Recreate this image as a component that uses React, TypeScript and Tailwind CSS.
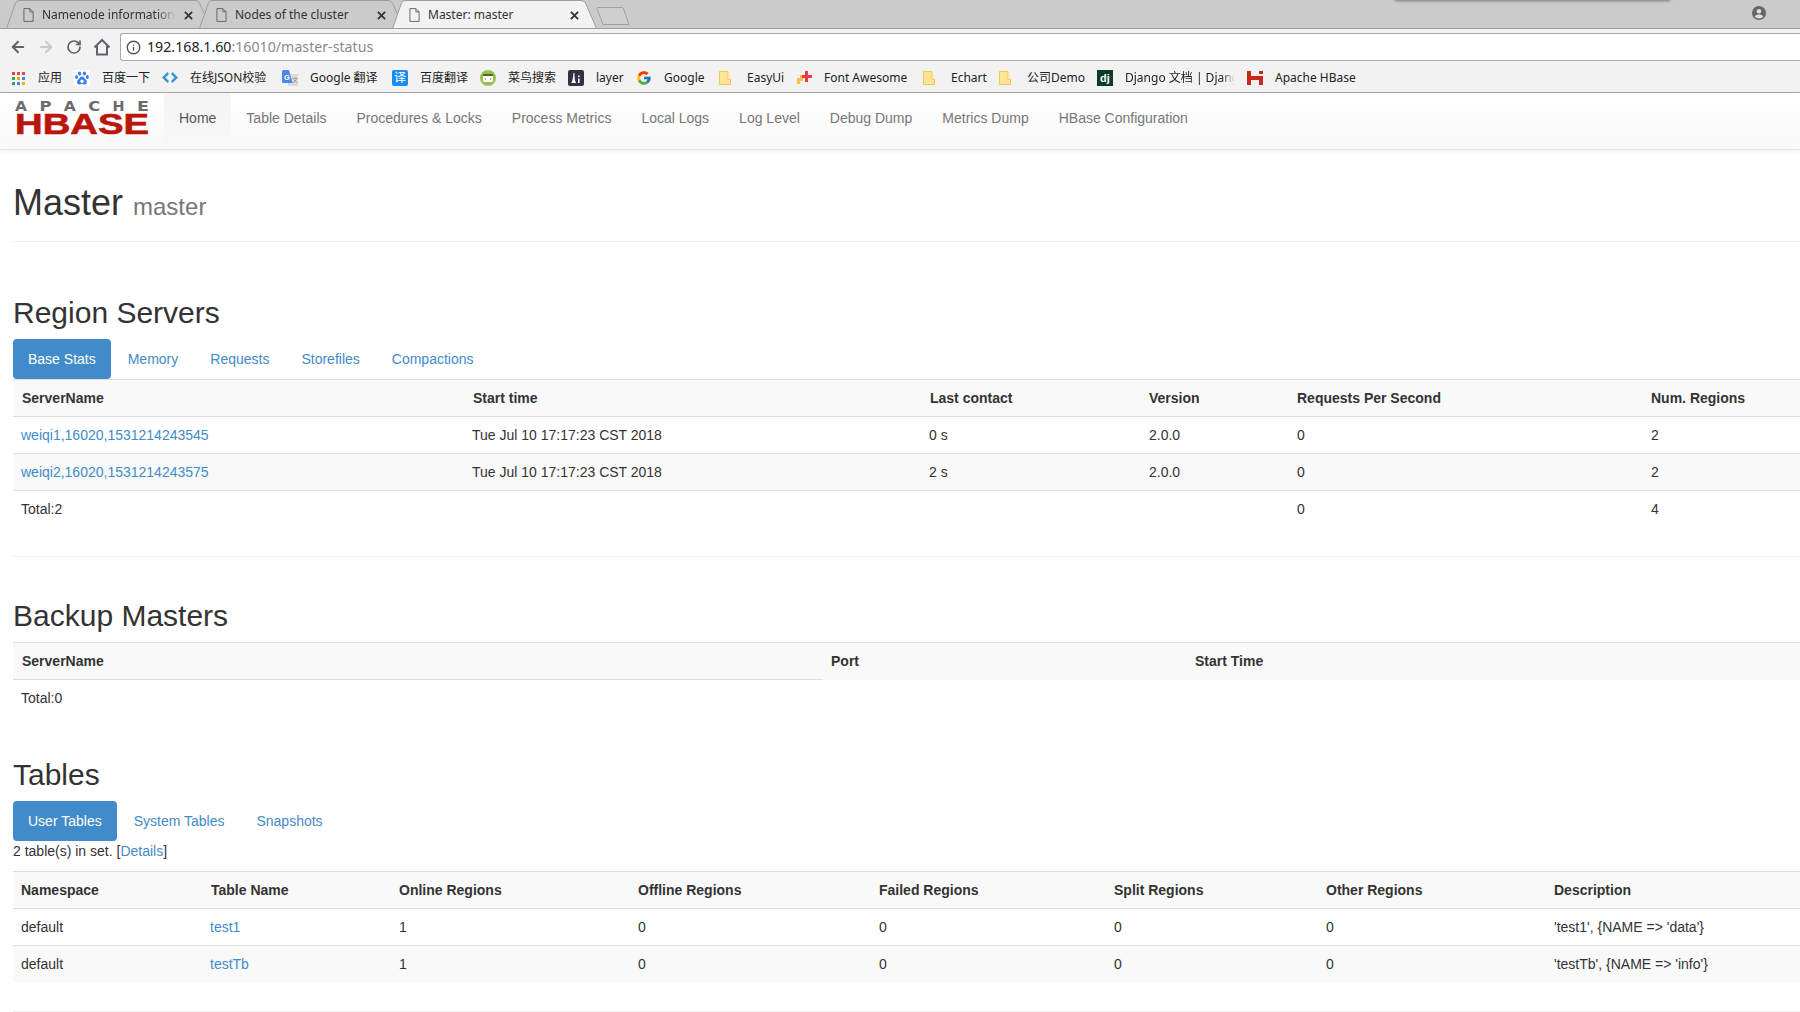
import { ArrowLeft, ArrowRight, RotateCw, Info } from "lucide-react";
import { FcGoogle } from "react-icons/fc";

const uiFont = "font-['Noto_Sans','Noto_Sans_CJK_SC',sans-serif]";

function FileIcon() {
  return (
    <svg viewBox="0 0 12 15" className="h-[14px] w-[11px] shrink-0" fill="none" stroke="#5f5f5f" strokeWidth="1">
      <path d="M1 .5h6.500L11 4v10.500H1z" />
      <path d="M7.500 .5V4H11" />
    </svg>
  );
}

function TabShape({ active }: { active?: boolean }) {
  return (
    <svg viewBox="0 0 205 29" className="absolute inset-0 h-[29px] w-[205px]">
      <path
        d="M0.5 28.5 L9.5 3 Q10.5 0.5 13 0.5 L189 0.5 Q192 0.5 193.5 3 L204.5 28.5"
        fill={active ? "#f2f2f2" : "#cbcbcb"}
        stroke="#9d9d9d"
      />
    </svg>
  );
}

function ChromeTab({ title, active, fade }: { title: string; active?: boolean; fade?: boolean }) {
  return (
    <div className={`relative -ml-[12px] h-[29px] w-[205px] shrink-0 first:ml-0 ${active ? "z-10" : ""}`}>
      <TabShape active={active} />
      <div className="relative flex h-[29px] items-center pl-[17px] pt-[1px]">
        <FileIcon />
        <span
          className={`ml-[8px] w-[134px] overflow-hidden whitespace-nowrap text-[12px] text-[#333] ${fade ? "[mask-image:linear-gradient(to_right,black_85%,transparent)]" : ""}`}
        >
          {title}
        </span>
        <svg viewBox="0 0 10 10" className="ml-[8px] h-[9px] w-[9px]" stroke="#333" strokeWidth="2">
          <path d="M1 1l8 8M9 1l-8 8" />
        </svg>
      </div>
    </div>
  );
}

function AppsIcon() {
  const colors = ["#e8453c", "#e8453c", "#e8453c", "#34a853", "#f4a300", "#4285f4", "#34a853", "#4285f4", "#f4b400"];
  return (
    <div className="grid w-[13px] grid-cols-3 gap-[2px]">
      {colors.map((c, i) => (
        <span key={i} className="h-[3px] w-[3px]" style={{ background: c }} />
      ))}
    </div>
  );
}

function BaiduIcon() {
  return (
    <svg viewBox="0 0 16 16" className="h-4 w-4">
      <rect width="16" height="16" fill="#fff" />
      <g fill="#3a7ff0">
        <ellipse cx="5.600" cy="3.400" rx="1.600" ry="2" />
        <ellipse cx="10.400" cy="3.400" rx="1.600" ry="2" />
        <ellipse cx="2.600" cy="7" rx="1.500" ry="1.900" />
        <ellipse cx="13.400" cy="7" rx="1.500" ry="1.900" />
        <path d="M8 6.500c-2 0-2.400 2-4 3.200C2.800 10.800 2.500 14.500 5.500 14.500c1 0 1.500-.4 2.500-.4s1.500.4 2.500.4c3 0 2.700-3.700 1.500-4.800C10.400 8.500 10 6.500 8 6.500z" />
      </g>
      <circle cx="8" cy="11.300" r="1.700" fill="#fff" />
    </svg>
  );
}

function JsonIcon() {
  return (
    <svg viewBox="0 0 16 16" className="h-4 w-4" fill="#3b93cf">
      <path d="M5.500 2 L0 7.500 L5.500 13 L7 11 L3.500 7.500 L7 4z" />
      <path d="M10.500 2 L16 7.500 L10.500 13 L9 11 L12.500 7.500 L9 4z" />
    </svg>
  );
}

function TranslateIcon() {
  return (
    <svg viewBox="0 0 16 16" className="h-4 w-4">
      <rect x="6" y="4" width="10" height="12" fill="#dcdcdc" />
      <path d="M0 1.500 Q0 0 1.500 0 H7 L10.500 13 H1.500 Q0 13 0 11.500z" fill="#4b87e8" />
      <text x="2" y="9.500" fontSize="7.500" fontWeight="700" fill="#fff" fontFamily="Liberation Sans">G</text>
      <text x="10" y="12" fontSize="6" fill="#888" fontFamily="Noto Sans CJK SC">文</text>
    </svg>
  );
}

function YiIcon() {
  return (
    <span className="flex h-4 w-4 items-center justify-center rounded-[2px] bg-[#1b8cf2] text-[12px] leading-none text-white">
      译
    </span>
  );
}

function RunoobIcon() {
  return (
    <svg viewBox="0 0 16 16" className="h-4 w-4">
      <circle cx="8" cy="8" r="8" fill="#96c14e" />
      <rect x="3" y="4" width="10" height="8" rx="1" fill="#fff" />
      <rect x="3" y="4" width="10" height="2" fill="#4d6b2a" />
      <path d="M6 8l-1 1 1 1M10 8l1 1-1 1" stroke="#4d6b2a" strokeWidth=".6" fill="none" />
    </svg>
  );
}

function LayerIcon() {
  return (
    <svg viewBox="0 0 16 16" className="h-4 w-4">
      <rect width="16" height="16" rx="2" fill="#2f3344" />
      <path d="M3 13 C4.500 12 5 8 5.500 3 L6.500 3 C6.500 8 7 12 8.500 13z" fill="#fff" />
      <rect x="10" y="8.500" width="1.600" height="4.500" fill="#fff" />
      <rect x="10" y="5.500" width="1.600" height="1.600" fill="#fff" />
    </svg>
  );
}

function FolderIcon() {
  return (
    <svg viewBox="0 0 12 14" className="mr-auto h-[14px] w-[12px]">
      <path d="M.5 .5h8.500v8h2.500v5H.5z" fill="#fde597" stroke="#efc74e" />
      <path d="M9 1h1.500v7.500H9z" fill="#fde597" />
    </svg>
  );
}

function FontAwesomeIcon() {
  return (
    <svg viewBox="0 0 16 16" className="h-4 w-4">
      <path d="M1 9h3V6h3v3h0v3H4v3H1z" fill="#f5c142" transform="translate(0 -1)" />
      <path d="M9 1h3v4h4v3h-4v4H9V8H6V5h3z" fill="#ee3a43" />
    </svg>
  );
}

function DjangoIcon() {
  return (
    <span className="flex h-4 w-4 items-center justify-center bg-[#0c3c26] font-['Liberation_Sans',sans-serif] text-[11px] font-bold leading-none text-white">
      dj
    </span>
  );
}

function HBaseIcon() {
  return (
    <svg viewBox="0 0 16 16" className="h-4 w-4" fill="#c9281a">
      <rect x="0" y="1" width="4" height="14" />
      <rect x="0" y="6" width="16" height="4" />
      <rect x="12" y="6" width="4" height="9" />
      <rect x="12" y="1" width="4" height="3" />
    </svg>
  );
}

const bookmarks: { label: string; icon: React.ReactNode; width: string; fade?: boolean }[] = [
  { label: "应用", icon: <AppsIcon />, width: "w-[64px]" },
  { label: "百度一下", icon: <BaiduIcon />, width: "w-[88px]" },
  { label: "在线JSON校验", icon: <JsonIcon />, width: "w-[120px]" },
  { label: "Google 翻译", icon: <TranslateIcon />, width: "w-[110px]" },
  { label: "百度翻译", icon: <YiIcon />, width: "w-[88px]" },
  { label: "菜鸟搜索", icon: <RunoobIcon />, width: "w-[88px]" },
  { label: "layer", icon: <LayerIcon />, width: "w-[68px]" },
  { label: "Google", icon: <FcGoogle size={16} />, width: "w-[83px]" },
  { label: "EasyUi", icon: <FolderIcon />, width: "w-[77px]" },
  { label: "Font Awesome", icon: <FontAwesomeIcon />, width: "w-[127px]" },
  { label: "Echart", icon: <FolderIcon />, width: "w-[76px]" },
  { label: "公司Demo", icon: <FolderIcon />, width: "w-[98px]" },
  { label: "Django 文档 | Django", icon: <DjangoIcon />, width: "w-[150px]", fade: true },
  { label: "Apache HBase", icon: <HBaseIcon />, width: "w-[120px]" },
];

function BrowserChrome() {
  return (
    <div className={uiFont}>
      {/* tab strip */}
      <div className="relative flex h-[29px] items-start overflow-hidden border-b border-[#9d9d9d] bg-[#cbcbcb] pl-[6px]">
        <ChromeTab title="Namenode information" fade />
        <ChromeTab title="Nodes of the cluster" />
        <ChromeTab title="Master: master" active />
        <svg viewBox="0 0 34 18" className="ml-[-1px] mt-[7px] h-[18px] w-[34px]" fill="#cfcfcf" stroke="#a0a0a0">
          <path d="M1 1.500 Q1 .5 2 .5 H26 Q27 .5 27.500 1.500 L33 17.500 H7z" />
        </svg>
        <div className="absolute left-[1395px] top-[-3px] h-[4px] w-[275px] bg-[#777] blur-[1.500px]" />
        <svg viewBox="0 0 14 14" className="absolute left-[1752px] top-[6px] h-[14px] w-[14px]">
          <circle cx="7" cy="7" r="7" fill="#666" />
          <circle cx="7" cy="5.200" r="2.300" fill="#ddd" />
          <path d="M2.800 10.500c.8-1.500 2.500-2 4.200-2s3.400.5 4.200 2c-1 1.300-2.500 2-4.200 2s-3.200-.7-4.200-2z" fill="#ddd" />
        </svg>
      </div>
      {/* toolbar */}
      <div className="flex h-[32px] items-center bg-[#f2f2f2] pt-[4px]">
        <div className="flex w-[120px] shrink-0 items-center pl-[9px]">
          <ArrowLeft size={18} strokeWidth={2.6} className="text-[#5f6368]" />
          <ArrowRight size={18} strokeWidth={2.6} className="ml-[10px] text-[#c9c9c9]" />
          <RotateCw size={16} strokeWidth={2.6} className="ml-[11px] text-[#5f6368]" />
          <svg viewBox="0 0 18 18" className="ml-[11px] h-[18px] w-[18px]" fill="none" stroke="#5f6368" strokeWidth="2">
            <path d="M1.500 9.500 9 2l7.500 7.500M4 8v8.500h10V8" />
          </svg>
        </div>
        <div className="flex h-[28px] flex-1 items-center rounded-l-[3px] border border-r-0 border-[#a9a9a9] bg-white pl-[5px]">
          <Info size={15} strokeWidth={2.2} className="text-[#555]" />
          <span className="ml-[6px] text-[14.200px] text-[#222]">
            192.168.1.60<span className="text-[#8a8a8a]">:16010/master-status</span>
          </span>
        </div>
      </div>
      {/* bookmarks */}
      <div className="flex h-[32px] items-center border-b border-[#a9a9a9] bg-[#f2f2f2] pl-[10px] pt-[3px] text-[12px] text-[#222]">
        {bookmarks.map((b) => (
          <div key={b.label} className={`flex shrink-0 items-center ${b.width}`}>
            <span className="flex w-4 shrink-0 items-center justify-center">{b.icon}</span>
            <span
              className={`ml-[12px] overflow-hidden whitespace-nowrap ${b.fade ? "w-[110px] [mask-image:linear-gradient(to_right,black_88%,transparent)]" : ""}`}
            >
              {b.label}
            </span>
          </div>
        ))}
      </div>
    </div>
  );
}

function Logo() {
  return (
    <svg viewBox="0 0 134 34" className="h-[34px] w-[134px] overflow-visible">
      {["A", "P", "A", "C", "H", "E"].map((letter, i) => (
        <text
          key={i}
          x={i * 24.4}
          y="10"
          fontSize="14"
          fontWeight="700"
          fill="#6b6b6b"
          fontFamily="DejaVu Sans"
          textLength="12"
          lengthAdjust="spacingAndGlyphs"
        >
          {letter}
        </text>
      ))}
      <text
        x="0"
        y="33"
        fontSize="29"
        fontWeight="700"
        fill="#ba160c"
        stroke="#ba160c"
        strokeWidth=".6"
        fontFamily="Liberation Sans"
        textLength="134"
        lengthAdjust="spacingAndGlyphs"
      >
        HBASE
      </text>
    </svg>
  );
}

function Navbar() {
  const items = ["Table Details", "Procedures & Locks", "Process Metrics", "Local Logs", "Log Level", "Debug Dump", "Metrics Dump", "HBase Configuration"];
  return (
    <div className="flex h-[57px] items-start border-b border-[#e7e7e7] bg-gradient-to-b from-white to-[#f8f8f8] pl-[15px] shadow-[0_1px_5px_rgba(0,0,0,0.08)]">
      <div className="w-[149px] shrink-0 pt-[8px]">
        <Logo />
      </div>
      <a className="h-[56px] bg-gradient-to-b from-[#f4f4f4] to-[#f8f8f8] px-[15px] pt-[15px] leading-5 text-[#555]">Home</a>
      {items.map((item) => (
        <a key={item} className="px-[15px] pt-[15px] leading-5 text-[#777]">
          {item}
        </a>
      ))}
    </div>
  );
}

function Pills({ items, active }: { items: string[]; active: string }) {
  return (
    <div className="flex gap-[2px]">
      {items.map((item) =>
        item === active ? (
          <a key={item} className="rounded-[4px] bg-[#428bca] px-[15px] py-[10px] leading-5 text-white">
            {item}
          </a>
        ) : (
          <a key={item} className="px-[15px] py-[10px] leading-5 text-[#428bca]">
            {item}
          </a>
        ),
      )}
    </div>
  );
}

const cell = "border-t border-[#ddd] p-2 text-left align-top leading-5";
const link = "text-[#428bca]";

function RegionServers() {
  const rows = [
    ["weiqi1,16020,1531214243545", "0 s", "bg-white"],
    ["weiqi2,16020,1531214243575", "2 s", "bg-[#f9f9f9]"],
  ];
  return (
    <table className="w-[1787px] table-fixed">
      <colgroup>
        <col className="w-[451px]" />
        <col className="w-[457px]" />
        <col className="w-[220px]" />
        <col className="w-[148px]" />
        <col className="w-[354px]" />
        <col className="w-[157px]" />
      </colgroup>
      <thead>
        <tr className="bg-[#f9f9f9]">
          <th className={`${cell} pl-[9px] font-bold`}>ServerName</th>
          <th className={`${cell} pl-[9px] font-bold`}>Start time</th>
          <th className={`${cell} pl-[9px] font-bold`}>Last contact</th>
          <th className={`${cell} font-bold`}>Version</th>
          <th className={`${cell} font-bold`}>Requests Per Second</th>
          <th className={`${cell} font-bold`}>Num. Regions</th>
        </tr>
      </thead>
      <tbody>
        {rows.map(([name, contact, bg]) => (
          <tr key={name} className={bg}>
            <td className={cell}>
              <a className={link}>{name}</a>
            </td>
            <td className={cell}>Tue Jul 10 17:17:23 CST 2018</td>
            <td className={cell}>{contact}</td>
            <td className={cell}>2.0.0</td>
            <td className={cell}>0</td>
            <td className={cell}>2</td>
          </tr>
        ))}
        <tr>
          <td className={cell}>Total:2</td>
          <td className={cell} />
          <td className={cell} />
          <td className={cell} />
          <td className={cell}>0</td>
          <td className={cell}>4</td>
        </tr>
      </tbody>
    </table>
  );
}

function BackupMasters() {
  return (
    <table className="w-[1787px] table-fixed">
      <colgroup>
        <col className="w-[810px]" />
        <col className="w-[364px]" />
        <col className="w-[613px]" />
      </colgroup>
      <thead>
        <tr className="bg-[#f9f9f9]">
          <th className={`${cell} pl-[9px] font-bold`}>ServerName</th>
          <th className={`${cell} font-bold`}>Port</th>
          <th className={`${cell} font-bold`}>Start Time</th>
        </tr>
      </thead>
      <tbody>
        <tr>
          <td className={cell}>Total:0</td>
        </tr>
      </tbody>
    </table>
  );
}

function UserTables() {
  const rows = [
    ["test1", "'test1', {NAME => 'data'}", "bg-white"],
    ["testTb", "'testTb', {NAME => 'info'}", "bg-[#f9f9f9]"],
  ];
  return (
    <table className="w-[1787px] table-fixed">
      <colgroup>
        <col className="w-[190px]" />
        <col className="w-[188px]" />
        <col className="w-[239px]" />
        <col className="w-[241px]" />
        <col className="w-[235px]" />
        <col className="w-[212px]" />
        <col className="w-[228px]" />
        <col className="w-[254px]" />
      </colgroup>
      <thead>
        <tr className="bg-[#f9f9f9]">
          {["Namespace", "Table Name", "Online Regions", "Offline Regions", "Failed Regions", "Split Regions", "Other Regions", "Description"].map((h) => (
            <th key={h} className={`${cell} font-bold`}>
              {h}
            </th>
          ))}
        </tr>
      </thead>
      <tbody>
        {rows.map(([name, desc, bg]) => (
          <tr key={name} className={bg}>
            <td className={cell}>default</td>
            <td className={`${cell} pl-[7px]`}>
              <a className={link}>{name}</a>
            </td>
            <td className={cell}>1</td>
            <td className={cell}>0</td>
            <td className={cell}>0</td>
            <td className={cell}>0</td>
            <td className={cell}>0</td>
            <td className={cell}>{desc}</td>
          </tr>
        ))}
      </tbody>
    </table>
  );
}

export default function App() {
  return (
    <div className="h-[1012px] overflow-hidden bg-white font-['Liberation_Sans',Arial,sans-serif] text-[14px] text-[#333]">
      <BrowserChrome />
      <Navbar />
      <div className="pl-[13px]">
        <div className="mt-[33px] border-b border-[#eee] pb-[18px]">
          <h1 className="text-[36px] leading-[40px]">
            Master <small className="text-[24px] leading-none text-[#777]">master</small>
          </h1>
        </div>

        <h2 className="mb-[10px] mt-[54px] text-[30px] leading-[33px]">Region Servers</h2>
        <Pills items={["Base Stats", "Memory", "Requests", "Storefiles", "Compactions"]} active="Base Stats" />
        <RegionServers />
        <hr className="mt-[29px] border-[#eee]" />

        <h2 className="mb-[10px] mt-[42px] text-[30px] leading-[33px]">Backup Masters</h2>
        <BackupMasters />

        <h2 className="mb-[10px] mt-[42px] text-[30px] leading-[33px]">Tables</h2>
        <Pills items={["User Tables", "System Tables", "Snapshots"]} active="User Tables" />
        <p className="mb-[10px] leading-5">
          2 table(s) in set. [<a className={link}>Details</a>]
        </p>
        <UserTables />
        <hr className="mt-[29px] border-[#eee]" />
      </div>
    </div>
  );
}
